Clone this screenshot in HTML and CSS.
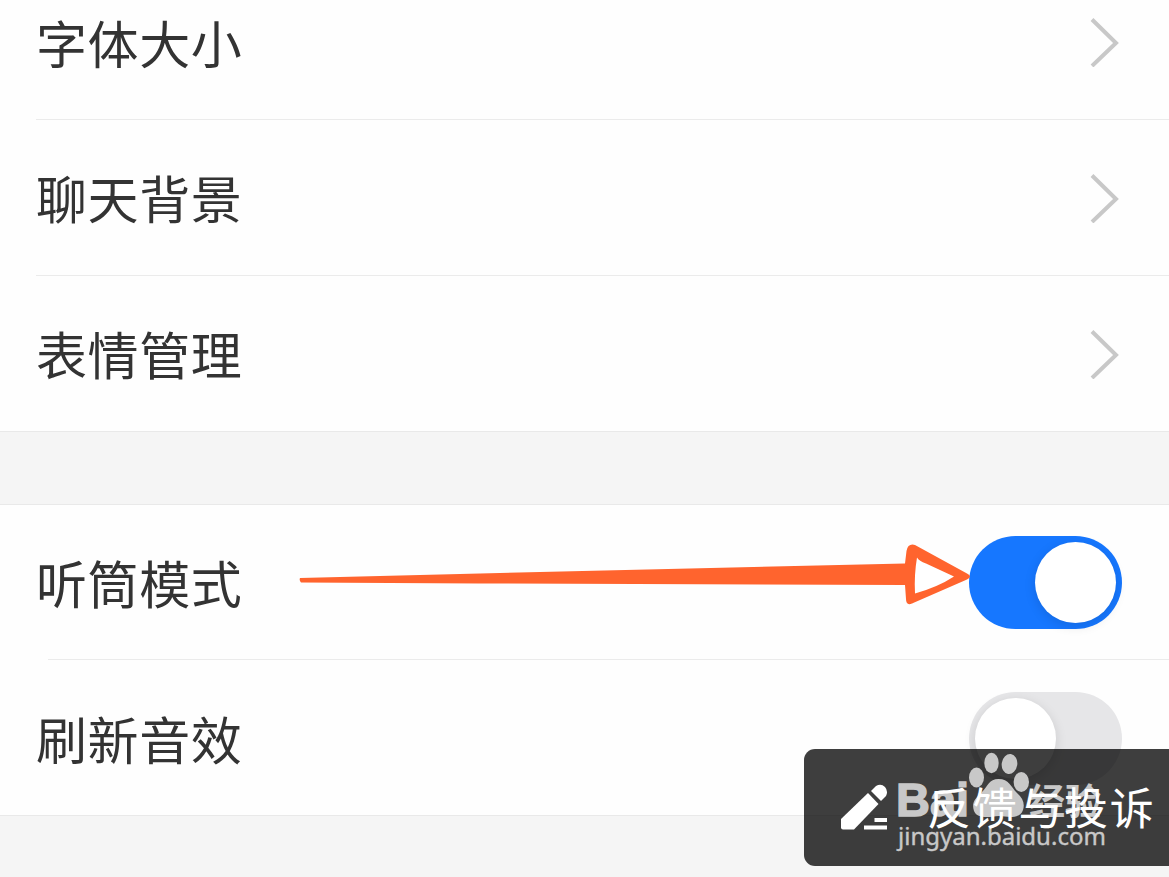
FILE: index.html
```html
<!DOCTYPE html>
<html lang="zh-CN">
<head>
    <meta charset="utf-8">
    <title>聊天设置</title>
    <link rel="stylesheet" href="styles.css">
</head>
<body>
    <div class="group">
        <div class="row row-first">
            <span class="label">字体大小</span>
            <svg class="chevron" width="30" height="50" viewBox="0 0 30 50"><path d="M2 2.500L26 26L2 49"/></svg>
        </div>
        <div class="row">
            <span class="label">聊天背景</span>
            <svg class="chevron" width="30" height="50" viewBox="0 0 30 50"><path d="M2 2.500L26 26L2 49"/></svg>
        </div>
        <div class="row">
            <span class="label">表情管理</span>
            <svg class="chevron" width="30" height="50" viewBox="0 0 30 50"><path d="M2 2.500L26 26L2 49"/></svg>
        </div>
    </div>

    <div class="group group-sound">
        <div class="row">
            <span class="label">听筒模式</span>
            <div class="switch on"><div class="knob"></div></div>
        </div>
        <div class="row row-refresh">
            <span class="label">刷新音效</span>
            <div class="switch"><div class="knob"></div></div>
        </div>
    </div>

    <!-- arrow pointing at the switch -->
    <svg class="arrow" width="680" height="70" viewBox="295 540 680 70">
        <path d="M300 578L480 573.500L905 563.500L906.500 551Q908 543 915 545L967 573.500Q973 576.500 967 579.500L912 603.500Q906 606 906 599L905 585L480 583.500L301 582.500Q299 580 300 578Z" fill="#ff642e"/>
        <path d="M917 557.500Q919 561 926 563.500L954 576.500Q938 587 915 593.500Q914 575 917 557.500Z" fill="#fff"/>
    </svg>

    <div class="feedback">
        <svg class="pencil" width="48" height="48" viewBox="840 783 48 48">
            <path d="M868 793L878.500 804L854 829.500H843Q841 829.500 841 827.500V819Z"/>
            <path d="M871 791L876 786Q881 783 885 787Q888.500 791 886 796L881 801Z"/>
            <path d="M874.500 818H887V822H874.500ZM864 825.500H887V829.500H864Z"/>
        </svg>
        <span class="feedback-text">反馈与投诉</span>
        <div class="watermark">
            <span class="brand">Bai</span>
            <svg class="paw" width="62" height="68" viewBox="967 751 62 68">
                <ellipse cx="991.500" cy="763" rx="7.200" ry="10.200"/>
                <ellipse cx="1009.500" cy="764" rx="7.800" ry="10" transform="rotate(8 1009.500 764)"/>
                <ellipse cx="976.500" cy="777.500" rx="7.500" ry="10"/>
                <ellipse cx="1021.300" cy="782" rx="7.700" ry="10"/>
                <path d="M998.500 779C1009 779 1011 787 1017 793C1023 798 1025 804 1023 810C1020 819 1009 817 999 816C989 817 977 819 974 811C971 802 976 798 982 792C988 786 989 779 998.500 779Z"/>
            </svg>
            <span class="brand-cn">经验</span>
            <span class="site">jingyan.baidu.com</span>
        </div>
    </div>
</body>
</html>
```
FILE: styles.css
```css
body {
    margin: 0;
    height: 877px;
    overflow: hidden;
    position: relative;
    background: #f5f5f5;
    font-family: "Noto Sans CJK SC", sans-serif;
}

.group {
    background: #fefefe;
    border-bottom: 1px solid #e9e9e9;
}

.group-sound {
    margin-top: 72px;
    border-top: 1px solid #e9e9e9;
}

.row {
    display: flex;
    align-items: center;
    justify-content: space-between;
    box-sizing: border-box;
    height: 156px;
    margin-left: 36px;
    padding-right: 47px;
    border-top: 1px solid #ebebeb;
}

.row-first {
    height: 119px;
    padding-bottom: 35px;
    border-top: none;
}

.group-sound .row {
    margin-left: 48px;
}

.group-sound .row:first-child {
    height: 154px;
    border-top: none;
}

.row-refresh {
    padding-top: 2px;
}

.group-sound .label {
    margin-left: -12px;
}

.label {
    padding-bottom: 1px;
    font-size: 51px;
    line-height: 70px;
    letter-spacing: 0.6px;
    color: #333;
}

.chevron {
    margin-right: 2px;
}

.chevron path {
    fill: none;
    stroke: #c8c8c8;
    stroke-width: 4;
}

.switch {
    display: flex;
    box-sizing: border-box;
    width: 153px;
    height: 93px;
    padding: 6px;
    border-radius: 47px;
    background: #e6e6e8;
}

.switch.on {
    justify-content: flex-end;
    background: #1677ff;
}

.knob {
    width: 81px;
    height: 81px;
    border-radius: 50%;
    background: #fff;
    box-shadow: 0 3px 12px rgba(0, 0, 0, 0.12);
}

.arrow {
    position: absolute;
    left: 295px;
    top: 540px;
}

.feedback {
    position: absolute;
    left: 804px;
    top: 749px;
    width: 380px;
    height: 116.5px;
    border-radius: 11px;
    background: rgba(0, 0, 0, 0.755);
}

.pencil {
    position: absolute;
    left: 36px;
    top: 34px;
    fill: #fff;
}

.feedback-text {
    position: absolute;
    z-index: 1;
    left: 123px;
    top: 26px;
    font-size: 44px;
    line-height: 62px;
    letter-spacing: 1.7px;
    white-space: nowrap;
    color: #fff;
}

.watermark {
    color: #c8c8c8;
}

.brand {
    position: absolute;
    left: 92px;
    top: 25px;
    font: bold 47px/52px "Liberation Sans", sans-serif;
    -webkit-text-stroke: 1.5px #c8c8c8;
}

.paw {
    position: absolute;
    left: 163px;
    top: 2px;
    fill: #c8c8c8;
}

.brand-cn {
    position: absolute;
    left: 225px;
    top: 25px;
    font-size: 36px;
    font-weight: bold;
    line-height: 50px;
}

.site {
    position: absolute;
    left: 94px;
    top: 70px;
    font: 24px/34px "Noto Sans", sans-serif;
    -webkit-text-stroke: 0.4px #c8c8c8;
}
```
